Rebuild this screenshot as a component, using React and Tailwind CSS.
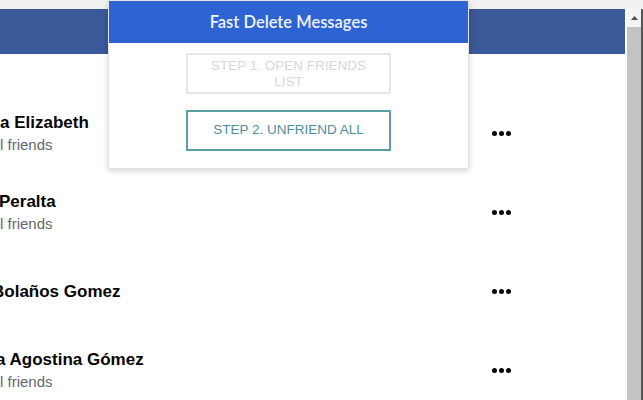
const rows = [
  { name: 'a Elizabeth', shift: 'ml-0', sub: 'l friends' },
  { name: 'Peralta', shift: 'ml-[-1px]', sub: 'l friends' },
  { name: 'Bolaños Gomez', shift: 'ml-[-8px]', sub: null },
  { name: 'a Agostina Gómez', shift: 'ml-[-4px]', sub: 'l friends' },
];

function FriendRow({ name, shift, sub }) {
  return (
    <div className="flex h-[79px] items-center">
      <div className="min-w-0 flex-1 overflow-hidden">
        <p className={`whitespace-nowrap text-[17px] font-bold leading-[22px] text-[#050505] ${shift}`}>{name}</p>
        {sub && <p className="whitespace-nowrap text-[15px] leading-[22px] text-[#65676b]">{sub}</p>}
      </div>
      <span className="mr-[114px] flex gap-[2px]">
        <i className="h-[5px] w-[5px] rounded-full bg-[#050505]" />
        <i className="h-[5px] w-[5px] rounded-full bg-[#050505]" />
        <i className="h-[5px] w-[5px] rounded-full bg-[#050505]" />
      </span>
    </div>
  );
}

function Popup() {
  return (
    <div className="absolute left-[108px] top-0 h-[169px] w-[361px] border border-[#e4e4e4] bg-white shadow-[0_2px_6px_rgba(0,0,0,0.18)]">
      <div className="flex h-[42px] items-center justify-center bg-[#2e63d4] font-['Lato',sans-serif] text-[16.5px] font-semibold text-[#eef2fb]">
        Fast Delete Messages
      </div>
      <div className="flex flex-col items-center gap-[16px] pt-[10px] font-['Liberation_Sans',Arial,sans-serif]">
        <button
          disabled
          className="flex h-[41px] w-[205px] items-center justify-center border-2 border-[#e6e6e6] px-[16px] text-center text-[13.5px] leading-[16px] text-[#d8d8d8]"
        >
          STEP 1. OPEN FRIENDS LIST
        </button>
        <button className="flex h-[41px] w-[205px] items-center justify-center border-2 border-[#5a9ea6] text-[13.5px] text-[#4f8e9b]">
          STEP 2. UNFRIEND ALL
        </button>
      </div>
    </div>
  );
}

export default function App() {
  return (
    <div className="relative flex h-[400px] w-[643px] flex-col overflow-hidden bg-white font-['Liberation_Sans',Arial,sans-serif]">
      <div className="h-[9px] bg-[#f1f1f1]" />
      <div className="flex min-h-0 flex-1">
        <main className="min-w-0 flex-1 bg-white">
          <div className="h-[45px] bg-[#3b5898]" />
          <div className="pt-[40px]">
            {rows.map((r) => (
              <FriendRow key={r.name} {...r} />
            ))}
          </div>
        </main>
        <div className="ml-[2px] flex w-[14px] flex-col bg-[#c3c3c3]">
          <div className="flex h-[18px] items-center justify-center bg-[#f4f4f4]">
            <svg width="7" height="4" viewBox="0 0 7 4">
              <path d="M0 4 L3.5 0 L7 4 Z" fill="#505050" />
            </svg>
          </div>
        </div>
        <div className="w-[2px] bg-[#555]" />
      </div>
      <Popup />
    </div>
  );
}
